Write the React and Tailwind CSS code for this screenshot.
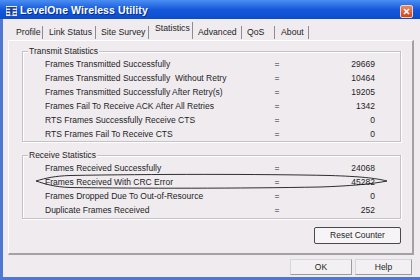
import React from "react";

const font = { fontFamily: '"Liberation Sans", Arial, sans-serif' };

const tabs = [
  { t: "Profile", w: "w-[33px]", pl: "pl-[6px]" },
  { t: "Link Status", w: "w-[53px]", pl: "pl-[6px]" },
  { t: "Site Survey", w: "w-[53px]", pl: "pl-[5px]" },
  { t: "Statistics", w: "w-[44px]", pl: "pl-[6px]", active: true },
  { t: "Advanced", w: "w-[49px]", pl: "pl-[5px]" },
  { t: "QoS", w: "w-[33px]", pl: "pl-[5px]" },
  { t: "About", w: "w-[34px]", pl: "pl-[6px]" },
];

const tx = [
  ["Frames Transmitted Successfully", "29669"],
  ["Frames Transmitted Successfully  Without Retry", "10464"],
  ["Frames Transmitted Successfully After Retry(s)", "19205"],
  ["Frames Fail To Receive ACK After All Retries", "1342"],
  ["RTS Frames Successfully Receive CTS", "0"],
  ["RTS Frames Fail To Receive CTS", "0"],
];
const rx = [
  ["Frames Received Successfully", "24068"],
  ["Frames Received With CRC Error", "45282"],
  ["Frames Dropped Due To Out-of-Resource", "0"],
  ["Duplicate Frames Received", "252"],
];

function Row({ label, value }) {
  return (
    <div className="flex h-[14px] items-center pl-[22px] pr-[25px] text-[8.5px] text-[#1e1e1e] whitespace-pre">
      <span className="w-[227px]">{label}</span>
      <span className="w-[10px] text-center">=</span>
      <span className="flex-1 text-right">{value}</span>
    </div>
  );
}

function Group({ title, rows, h }) {
  return (
    <div className={`relative mx-[13px] mr-[11px] ${h} border border-[#c4c2c6] shadow-[inset_1px_1px_0_#ffffff,1px_1px_0_#ffffff]`}>
      <span className="absolute left-[5px] top-[-6px] bg-[#efebef] px-[1px] text-[8.5px] leading-[10px] text-[#1e1e1e]">
        {title}
      </span>
      <div className="pt-[5px]">
        {rows.map(([l, v]) => (
          <Row key={l} label={l} value={v} />
        ))}
      </div>
    </div>
  );
}

export default function App() {
  return (
    <div style={font} className="relative flex h-[280px] w-[420px] flex-col overflow-hidden bg-[#efebef]">
      {/* title bar */}
      <div className="flex h-[19px] shrink-0 items-center bg-gradient-to-b from-[#4a8ef2] via-[#1658dc] to-[#0c4ccc] pl-[6px]">
        <svg width="11" height="10" viewBox="0 0 11 10" className="mt-[3px]">
          <rect x="0" y="0" width="11" height="10" fill="#e8eefc" />
          <rect x="0.5" y="1" width="10" height="1.6" fill="#1b3fa0" />
          <rect x="0.5" y="4" width="10" height="1.4" fill="#1b3fa0" />
          <rect x="4.2" y="1" width="2.4" height="8.5" fill="#1b3fa0" />
          <rect x="0.5" y="7" width="3" height="1.4" fill="#1b3fa0" />
          <rect x="7.5" y="7" width="3" height="1.4" fill="#1b3fa0" />
        </svg>
        <span className="ml-[3px] mt-[2px] text-[10.5px] font-bold tracking-[0.1px] text-white [text-shadow:1px_1px_0_#0a2f8a]">
          LevelOne Wireless Utility
        </span>
        <div className="ml-auto mr-[7px] mt-[3px] flex h-[13px] w-[13px] items-center justify-center rounded-[2px] border border-[#f6d0c0] bg-gradient-to-b from-[#e98a62] to-[#c9441c]">
          <svg width="7" height="7" viewBox="0 0 7 7">
            <path d="M1 1 L6 6 M6 1 L1 6" stroke="#ffffff" strokeWidth="1.6" />
          </svg>
        </div>
      </div>

      {/* body */}
      <div className="flex flex-1 flex-col border-b-[3px] border-l-[3px] border-[#4f78d2]">
        {/* tabs */}
        <div className="flex h-[21px] shrink-0 items-end pl-[7px]">
          {tabs.map((t) => (
            <div
              key={t.t}
              className={`${t.w} ${t.pl} flex items-center border-r border-[#8e8c90] text-[8.7px] text-[#1e1e1e] ${
                t.active ? "mb-[1px] h-[17px] pb-[3px]" : "mb-[1px] h-[13px]"
              }`}
            >
              {t.t}
            </div>
          ))}
        </div>

        {/* panel */}
        <div className="ml-[5px] mr-[6px] flex h-[215px] shrink-0 flex-col border-b-2 border-r-2 border-l border-t border-b-[#a3a1a5] border-l-[#ffffff] border-r-[#a3a1a5] border-t-[#ffffff]">
          <div className="h-[10px]" />
          <Group title="Transmit Statistics" rows={tx} h="h-[91px]" />
          <div className="h-[13px]" />
          <Group title="Receive Statistics" rows={rx} h="h-[64px]" />
          <div className="flex justify-end pr-[11px] pt-[8px]">
            <button className="h-[17px] w-[87px] rounded-[2px] border border-[#4a4a4a] bg-[#f6f4f6] text-[8.5px] text-[#1e1e1e]">
              Reset Counter
            </button>
          </div>
        </div>

        {/* bottom buttons */}
        <div className="flex justify-end gap-[3px] pr-[8px] pt-[4px]">
          <button className="h-[16px] w-[62px] border border-[#d8d6da] border-b-[#9c9a9e] border-r-[#9c9a9e] bg-[#f2f0f2] text-[8.5px] text-[#1e1e1e]">
            OK
          </button>
          <button className="h-[16px] w-[57px] border border-[#d8d6da] border-b-[#9c9a9e] border-r-[#9c9a9e] bg-[#f2f0f2] text-[8.5px] text-[#1e1e1e]">
            Help
          </button>
        </div>
      </div>

      {/* hand-drawn ellipse annotation */}
      <svg className="pointer-events-none absolute left-0 top-0" width="420" height="280" viewBox="0 0 420 280">
        <path
          d="M36 181 C46 178 55 176 70 175.5 C150 174 260 174 330 175.5 C360 176.5 375 178 387 181 C372 184 350 186 320 187 C240 188.5 140 188.5 70 187.5 C55 187 45 184 36 181 Z"
          fill="none"
          stroke="#1a1a1a"
          strokeWidth="0.9"
        />
      </svg>
    </div>
  );
}
